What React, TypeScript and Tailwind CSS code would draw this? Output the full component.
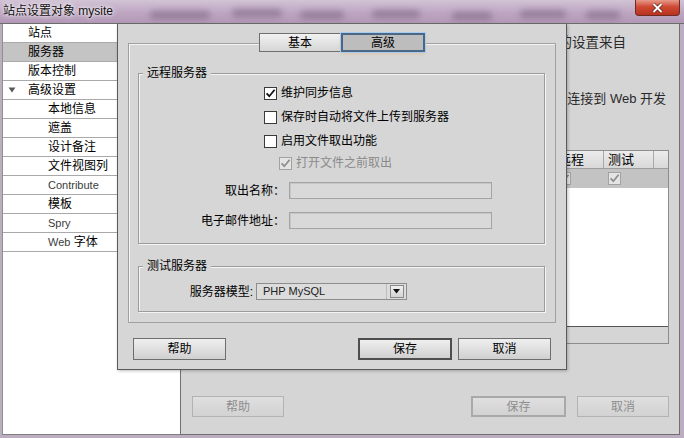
import type { ReactNode } from "react";

type NavItem = {
  label: ReactNode;
  level: 0 | 1;
  active?: boolean;
  open?: boolean;
};

const navItems: NavItem[] = [
  { label: "站点", level: 0 },
  { label: "服务器", level: 0, active: true },
  { label: "版本控制", level: 0 },
  { label: "高级设置", level: 0, open: true },
  { label: "本地信息", level: 1 },
  { label: "遮盖", level: 1 },
  { label: "设计备注", level: 1 },
  { label: "文件视图列", level: 1 },
  { label: <span className="text-[11px] text-[#3b3b3b]">Contribute</span>, level: 1 },
  { label: "模板", level: 1 },
  { label: <span className="text-[11px] text-[#3b3b3b]">Spry</span>, level: 1 },
  {
    label: (
      <>
        <span className="text-[11px] text-[#3b3b3b]">Web</span> 字体
      </>
    ),
    level: 1,
  },
];

// blurred shapes seen through the aero glass title bar
const glassBlobs = [
  { left: 150, width: 60, top: 11 },
  { left: 232, width: 50, top: 9 },
  { left: 300, width: 44, top: 11 },
  { left: 372, width: 48, top: 10 },
  { left: 452, width: 40, top: 12 },
  { left: 520, width: 46, top: 10 },
  { left: 586, width: 34, top: 11 },
];

function Checkbox({ checked = false, disabled = false }: { checked?: boolean; disabled?: boolean }) {
  return (
    <span
      className={
        disabled
          ? "flex h-[13px] w-[13px] shrink-0 items-center justify-center border border-[#a2a2a2] bg-[#e4e4e4]"
          : "flex h-[13px] w-[13px] shrink-0 items-center justify-center border border-[#3a3a3a] bg-white"
      }
    >
      {checked && (
        <svg width="11" height="11" viewBox="0 0 11 11">
          <path
            d="M1.6 5.4 L4.3 8.2 L9.6 1.8"
            fill="none"
            stroke={disabled ? "#8e8e8e" : "#111"}
            strokeWidth="1.8"
          />
        </svg>
      )}
    </span>
  );
}

function TitleBar() {
  return (
    <div className="relative h-[23px] shrink-0 overflow-hidden bg-[linear-gradient(180deg,#d2c3d5_0%,#bea6c2_55%,#b298b6_100%)]">
      {glassBlobs.map((b) => (
        <div
          key={b.left}
          className="absolute h-[8px] rounded-full bg-[#7b6580] opacity-60 blur-[3px]"
          style={{ left: b.left, width: b.width, top: b.top }}
        />
      ))}
      <div className="relative pl-[3px] pt-[3px] text-[12px] leading-[16px] text-[#111] [text-shadow:0_0_6px_#ffffff,0_0_3px_#ffffff]">
        站点设置对象 mysite
      </div>
      <div className="absolute right-[4px] top-0 flex h-[16px] w-[45px] items-center justify-center rounded-b-[4px] border border-t-0 border-[#6e2b22] bg-[linear-gradient(180deg,#e79a8a_0%,#cf4a34_45%,#b8321f_100%)]">
        <svg width="11" height="10" viewBox="0 0 11 10">
          <path d="M1.5 1 L9.5 9 M9.5 1 L1.5 9" stroke="#5a1a12" strokeWidth="3.4" />
          <path d="M1.5 1 L9.5 9 M9.5 1 L1.5 9" stroke="#ffffff" strokeWidth="2" />
        </svg>
      </div>
    </div>
  );
}

function Sidebar() {
  return (
    <aside className="flex w-[179px] shrink-0 flex-col border-x border-b border-l-[#8f8f8f] border-r-[#6f6f6f] border-b-[#7f7f7f] bg-white">
      {navItems.map((item, i) => (
        <div
          key={i}
          className={`flex h-[19px] items-center border-b border-[#a9a9a9] text-[12px] leading-[18px] ${
            item.active ? "bg-[#c4c4c4]" : ""
          } ${item.level === 0 ? "pl-[5px]" : "pl-[45px]"}`}
        >
          {item.level === 0 && (
            <span className="flex w-[20px] items-center">
              {item.open && (
                <svg width="8" height="6" viewBox="0 0 8 6">
                  <path d="M0.5 0.5 H7.5 L4 5.5 Z" fill="#5a5a5a" />
                </svg>
              )}
            </span>
          )}
          <span>{item.label}</span>
        </div>
      ))}
    </aside>
  );
}

function BgButton({ children, primary = false, width }: { children: ReactNode; primary?: boolean; width: string }) {
  return (
    <div
      className={`flex h-[21px] items-center justify-center bg-[linear-gradient(180deg,#dfdfdf,#d2d2d2)] text-[12px] text-[#8e8e8e] ${width} ${
        primary ? "border-2 border-[#a9a9a9]" : "border border-[#b3b3b3]"
      }`}
    >
      {children}
    </div>
  );
}

function ServerTable() {
  return (
    <div className="mr-[10px] mt-[43px] flex h-[194px] w-[230px] flex-col self-end border border-[#8c8c8c]">
      <div className="flex h-[18px] shrink-0 border-b border-[#9d9d9d] bg-[linear-gradient(180deg,#ececec,#d8d8d8)] text-[13px] leading-[17px]">
        <div className="w-[113px] pl-[4px]">名称</div>
        <div className="w-[50px] border-l border-[#a8a8a8] pl-[4px]">远程</div>
        <div className="w-[50px] border-l border-[#a8a8a8] pl-[4px]">测试</div>
        <div className="flex-1 border-l border-[#a8a8a8]" />
      </div>
      <div className="flex h-[19px] shrink-0 items-center bg-[#c3c3c3]">
        <div className="w-[113px]" />
        <div className="w-[50px] pl-[5px]">
          <Checkbox checked disabled />
        </div>
        <div className="w-[50px] pl-[5px]">
          <Checkbox checked disabled />
        </div>
      </div>
      <div className="flex-1 border-b border-[#555555] bg-white" />
      <div className="h-[16px] shrink-0" />
    </div>
  );
}

function MainPanel() {
  return (
    <section className="flex flex-1 flex-col border-b border-r border-[#6f6f6f] bg-[#d5d5d5]">
      <p className="mt-[11px] whitespace-nowrap pr-[53px] text-right text-[13.5px] leading-[16px] text-[#2a2a2a]">
        此对话框的设置来自
      </p>
      <p className="mt-[40px] whitespace-nowrap pr-[13px] text-right text-[13px] leading-[16px] text-[#2a2a2a]">
        如果要连接到 Web 开发
      </p>
      <ServerTable />
      <div className="mt-[52px] flex items-center pl-[11px] pr-[10px]">
        <BgButton width="w-[92px]">帮助</BgButton>
        <div className="ml-auto flex gap-[11px]">
          <BgButton width="w-[95px]" primary>
            保存
          </BgButton>
          <BgButton width="w-[92px]">取消</BgButton>
        </div>
      </div>
    </section>
  );
}

function GroupBox({ title, className, children }: { title: string; className: string; children: ReactNode }) {
  return (
    <div
      className={`relative border border-[#9c9c9c] shadow-[inset_1px_1px_0_#f4f4f4,1px_1px_0_#f4f4f4] ${className}`}
    >
      <span className="absolute -top-[9px] left-[4px] bg-[#d6d6d6] px-[4px] text-[12px] leading-[16px]">{title}</span>
      {children}
    </div>
  );
}

function DialogButton({ children, primary = false, width }: { children: ReactNode; primary?: boolean; width: string }) {
  return (
    <div
      className={`flex h-[22px] items-center justify-center bg-[linear-gradient(180deg,#efefef,#d0d0d0)] text-[12px] ${width} ${
        primary ? "border-2 border-[#4e4e4e]" : "border border-[#6e6e6e]"
      }`}
    >
      {children}
    </div>
  );
}

function SettingsDialog() {
  return (
    <div className="absolute left-[117px] top-[24px] flex h-[346px] w-[450px] flex-col border-x border-b border-[#5a5a5a] bg-[#d6d6d6] shadow-[1px_1px_3px_rgba(0,0,0,0.25)]">
      <div className="relative z-10 mt-[9px] flex justify-center text-[12px]">
        <div className="flex h-[19px] w-[82px] items-center justify-center border border-[#6f6f6f] bg-[linear-gradient(180deg,#f1f1f1,#d6d6d6)]">
          基本
        </div>
        <div className="flex h-[19px] w-[84px] items-center justify-center border-2 border-[#4a6886] bg-[#bdbdbd] shadow-[0_0_0_1px_#a8cbee,0_2px_3px_rgba(235,165,80,0.35)]">
          高级
        </div>
      </div>

      <div className="-mt-[9px] mx-[10px] flex h-[280px] flex-col border border-[#a0a0a0] shadow-[inset_1px_1px_0_#f4f4f4]">
        <GroupBox title="远程服务器" className="ml-[9px] mr-[10px] mt-[29px] pb-[14px] pt-[7px]">
          <div className="flex h-[24px] items-center gap-[4px] pl-[125px] text-[12px]">
            <Checkbox checked />
            <span>维护同步信息</span>
          </div>
          <div className="flex h-[24px] items-center gap-[4px] pl-[125px] text-[12px]">
            <Checkbox />
            <span>保存时自动将文件上传到服务器</span>
          </div>
          <div className="flex h-[24px] items-center gap-[4px] pl-[125px] text-[12px]">
            <Checkbox />
            <span>启用文件取出功能</span>
          </div>
          <div className="flex h-[20px] items-center gap-[4px] pl-[140px] text-[12px] text-[#8a8a8a]">
            <Checkbox checked disabled />
            <span>打开文件之前取出</span>
          </div>
          <div className="mt-[9px] flex h-[17px] items-center gap-[4px] text-[12px]">
            <span className="w-[146px] text-right">取出名称：</span>
            <span className="h-[17px] w-[203px] border border-[#a4a4a4] bg-[#d9d9d9] shadow-[inset_1px_1px_0_#c6c6c6]" />
          </div>
          <div className="mt-[13px] flex h-[17px] items-center gap-[4px] text-[12px]">
            <span className="w-[146px] text-right">电子邮件地址：</span>
            <span className="h-[17px] w-[203px] border border-[#a4a4a4] bg-[#d9d9d9] shadow-[inset_1px_1px_0_#c6c6c6]" />
          </div>
        </GroupBox>

        <GroupBox title="测试服务器" className="ml-[9px] mr-[10px] mt-[22px] pb-[11px] pt-[16px]">
          <div className="flex h-[17px] items-center text-[12px]">
            <span className="w-[117px] pr-[3px] text-right">服务器模型:</span>
            <div className="flex h-[17px] w-[151px] items-center border border-[#8d8d8d] bg-[#dcdcdc]">
              <span className="flex-1 pl-[6px] text-[11px] text-[#222]">PHP MySQL</span>
              <span className="flex h-full w-[20px] items-center justify-center border-l border-[#bcbcbc]">
                <span className="flex h-[13px] w-[14px] items-center justify-center border border-[#8a8a8a] bg-[linear-gradient(180deg,#f0f0f0,#d4d4d4)]">
                  <svg width="7" height="5" viewBox="0 0 7 5">
                    <path d="M0 0 H7 L3.5 4.5 Z" fill="#111" />
                  </svg>
                </span>
              </span>
            </div>
          </div>
        </GroupBox>
      </div>

      <div className="mt-[15px] flex items-center px-[15px]">
        <DialogButton width="w-[93px]">帮助</DialogButton>
        <div className="ml-auto flex gap-[6px]">
          <DialogButton width="w-[94px]" primary>
            保存
          </DialogButton>
          <DialogButton width="w-[93px]">取消</DialogButton>
        </div>
      </div>
    </div>
  );
}

export default function App() {
  return (
    <div className="relative flex h-[438px] w-[684px] flex-col overflow-hidden bg-[#bcadc0] font-['Liberation_Sans','Noto_Sans_CJK_SC',sans-serif] text-[12px] text-black">
      <TitleBar />
      <div className="flex h-[412px] border-t border-[#6d6d6d] pl-[2px] pr-[4px]">
        <Sidebar />
        <MainPanel />
      </div>
      <SettingsDialog />
    </div>
  );
}
